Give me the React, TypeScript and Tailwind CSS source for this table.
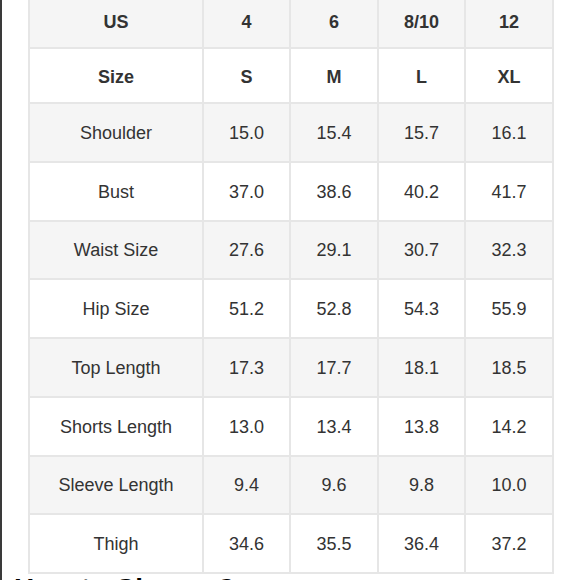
const header = ["US", "4", "6", "8/10", "12"];
const sizes = ["Size", "S", "M", "L", "XL"];

const rows: string[][] = [
  ["Shoulder", "15.0", "15.4", "15.7", "16.1"],
  ["Bust", "37.0", "38.6", "40.2", "41.7"],
  ["Waist Size", "27.6", "29.1", "30.7", "32.3"],
  ["Hip Size", "51.2", "52.8", "54.3", "55.9"],
  ["Top Length", "17.3", "17.7", "18.1", "18.5"],
  ["Shorts Length", "13.0", "13.4", "13.8", "14.2"],
  ["Sleeve Length", "9.4", "9.6", "9.8", "10.0"],
  ["Thigh", "34.6", "35.5", "36.4", "37.2"],
];

const widths = ["w-[174px]", "w-[87px]", "w-[88px]", "w-[87px]", "w-[88px]"];

export default function App() {
  return (
    <div className="flex h-[580px] w-[580px] overflow-hidden bg-white font-['Liberation_Sans',Arial,sans-serif] text-[#333]">
      <div className="h-full w-[2px] shrink-0 bg-[#3a3a3a]" />
      <div className="flex flex-col">
        <table className="-mt-[7px] ml-[26px] border-collapse text-[18px]">
          <tbody>
            <tr className="h-[54px] bg-[#f5f5f5] font-bold">
              {header.map((c, i) => (
                <td key={i} className={`${widths[i]} border-2 border-[#e6e6e6] pt-[3px] text-center`}>
                  {c}
                </td>
              ))}
            </tr>
            <tr className="h-[55px] bg-white font-bold">
              {sizes.map((c, i) => (
                <td key={i} className={`${widths[i]} border-2 border-[#e6e6e6] pt-[3px] text-center`}>
                  {c}
                </td>
              ))}
            </tr>
            {rows.map((r, ri) => (
              <tr key={ri} className={`h-[58.75px] ${ri % 2 === 0 ? "bg-[#f5f5f5]" : "bg-white"}`}>
                {r.map((c, i) => (
                  <td key={i} className={`${widths[i]} border-2 border-[#e6e6e6] pt-[2px] text-center`}>
                    {c}
                  </td>
                ))}
              </tr>
            ))}
          </tbody>
        </table>
        <div className="ml-[12px] mt-[1px] whitespace-nowrap text-[28px] font-bold leading-none text-black">
          How to Choose?
        </div>
      </div>
    </div>
  );
}
